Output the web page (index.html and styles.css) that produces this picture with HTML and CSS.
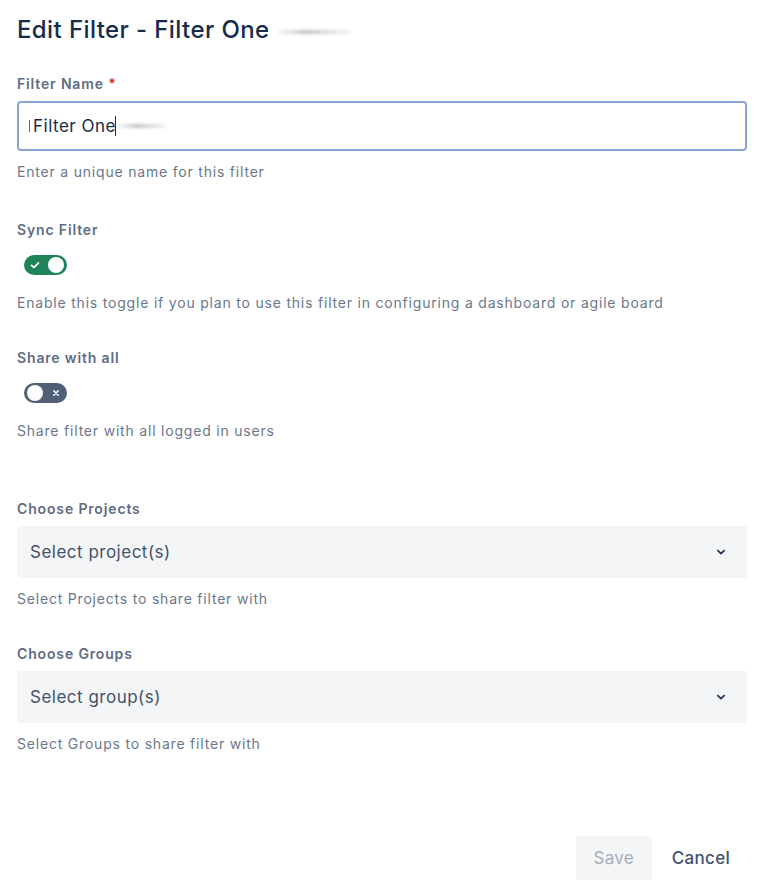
FILE: index.html
```html
<!DOCTYPE html>
<html lang="en">
<head>
<meta charset="utf-8">
<title>Edit Filter - Filter One</title>
<link rel="stylesheet" href="styles.css">
</head>
<body>
<div class="dialog">
  <h1 class="title">Edit Filter - Filter One <span class="smudge smudge-title"></span></h1>

  <div class="field field-name">
    <label class="label">Filter Name <span class="req">*</span></label>
    <div class="input">
      <span class="caret caret-start"></span>
      <span class="input-text">Filter One</span><span class="caret caret-end"></span>
      <span class="smudge smudge-input"></span>
    </div>
    <div class="help">Enter a unique name for this filter</div>
  </div>

  <div class="field field-sync">
    <label class="label">Sync Filter</label>
    <div class="toggle toggle-on">
      <svg class="toggle-icon icon-check" viewBox="0 0 12 12" width="12" height="12"><path d="M2.5 6.3 L5 8.5 L9.5 3.8" fill="none" stroke="#fff" stroke-width="1.7" stroke-linecap="round" stroke-linejoin="round"/></svg>
      <span class="knob"></span>
    </div>
    <div class="help">Enable this toggle if you plan to use this filter in configuring a dashboard or agile board</div>
  </div>

  <div class="field field-share">
    <label class="label">Share with all</label>
    <div class="toggle toggle-off">
      <span class="knob"></span>
      <svg class="toggle-icon icon-x" viewBox="0 0 12 12" width="12" height="12"><path d="M3.8 3.8 L8.2 8.2 M8.2 3.8 L3.8 8.2" fill="none" stroke="#fff" stroke-width="1.6" stroke-linecap="round"/></svg>
    </div>
    <div class="help">Share filter with all logged in users</div>
  </div>

  <div class="field field-projects">
    <label class="label">Choose Projects</label>
    <div class="select">
      <span class="select-text">Select project(s)</span>
      <svg class="chevron" viewBox="0 0 24 24" width="20" height="20"><path d="M8.3 10.3 L12 14 L15.7 10.3" fill="none" stroke="#253858" stroke-width="2.2" stroke-linecap="round" stroke-linejoin="round"/></svg>
    </div>
    <div class="help">Select Projects to share filter with</div>
  </div>

  <div class="field field-groups">
    <label class="label">Choose Groups</label>
    <div class="select">
      <span class="select-text">Select group(s)</span>
      <svg class="chevron" viewBox="0 0 24 24" width="20" height="20"><path d="M8.3 10.3 L12 14 L15.7 10.3" fill="none" stroke="#253858" stroke-width="2.2" stroke-linecap="round" stroke-linejoin="round"/></svg>
    </div>
    <div class="help">Select Groups to share filter with</div>
  </div>

  <div class="footer">
    <button class="btn btn-save" disabled>Save</button>
    <button class="btn btn-cancel">Cancel</button>
  </div>
</div>
</body>
</html>
```

FILE: styles.css
```css
* { box-sizing: border-box; }

html, body {
  margin: 0;
  padding: 0;
  background: #ffffff;
}

body {
  font-family: Inter, "Noto Sans", "Liberation Sans", sans-serif;
  color: #172b4d;
}

.dialog {
  width: 760px;
  padding: 14px 13px 0 17px;
  display: flex;
  flex-direction: column;
}

.title {
  margin: 0;
  font-size: 24px;
  font-weight: 500;
  line-height: 32px;
  color: #172b4d;
  display: flex;
  align-items: center;
  letter-spacing: 0.4px;
}

.smudge {
  display: inline-block;
  height: 4px;
  border-radius: 3px;
  background: linear-gradient(90deg, rgba(150,155,165,0.1), rgba(140,145,155,0.55) 40%, rgba(150,155,165,0.1));
  filter: blur(1.5px);
}

.smudge-title {
  width: 72px;
  margin-left: 8px;
  margin-top: 4px;
}

.field {
  display: flex;
  flex-direction: column;
}

.label {
  font-size: 14px;
  font-weight: 600;
  color: #5e6c84;
  line-height: 18px;
  letter-spacing: 0.85px;
}

.req { color: #de350b; }

.help {
  font-size: 14px;
  color: #6b778c;
  line-height: 18px;
  letter-spacing: 0.8px;
}

.field-name { margin-top: 29px; }
.field-name .label { margin-bottom: 8px; }

.input {
  height: 50px;
  border: 2px solid #8aa4d4;
  border-radius: 4px;
  display: flex;
  align-items: center;
  padding-left: 10px;
  font-size: 17px;
  letter-spacing: 0.5px;
  color: #172b4d;
  margin-bottom: 12px;
}

.caret {
  display: inline-block;
  width: 1px;
  background: #172b4d;
}
.caret-start { height: 12px; margin-right: 3px; opacity: 0.7; }
.caret-end { height: 20px; margin-left: -1px; }

.smudge-input {
  width: 48px;
  height: 4px;
  margin-left: 2px;
}

.field-sync { margin-top: 40px; }
.field-share { margin-top: 37px; }

.toggle {
  width: 43px;
  height: 20px;
  border-radius: 10px;
  display: flex;
  align-items: center;
  justify-content: space-between;
  padding: 0 3px 0 3px;
  margin: 16px 0 19px 7px;
}

.toggle-on { background: #1f845a; padding-left: 5px; }
.toggle-off { background: #505f79; padding-right: 5px; }

.knob {
  width: 16px;
  height: 16px;
  border-radius: 50%;
  background: #ffffff;
}

.toggle-icon { display: block; }

.field-projects { margin-top: 60px; }
.field-groups { margin-top: 37px; }

.select {
  height: 52px;
  background: #f4f5f7;
  border-radius: 3px;
  margin: 8px 0 12px 0;
  display: flex;
  align-items: center;
  justify-content: space-between;
  padding: 0 16px 0 13px;
}

.select-text {
  font-size: 17px;
  color: #42526e;
  letter-spacing: 0.5px;
}

.chevron { display: block; }

.footer {
  margin-top: 83px;
  display: flex;
  justify-content: flex-end;
  align-items: center;
  gap: 8px;
  padding-right: 3px;
}

.btn {
  font-family: inherit;
  font-size: 17px;
  border: none;
  border-radius: 3px;
  height: 44px;
  padding: 0 17px;
  cursor: pointer;
  letter-spacing: 0.3px;
}

.btn-save {
  background: #f4f5f7;
  color: #a5adba;
  width: 76px;
}

.btn-cancel {
  background: transparent;
  color: #42526e;
  font-weight: 500;
  padding: 0 14px 0 12px;
}
```
